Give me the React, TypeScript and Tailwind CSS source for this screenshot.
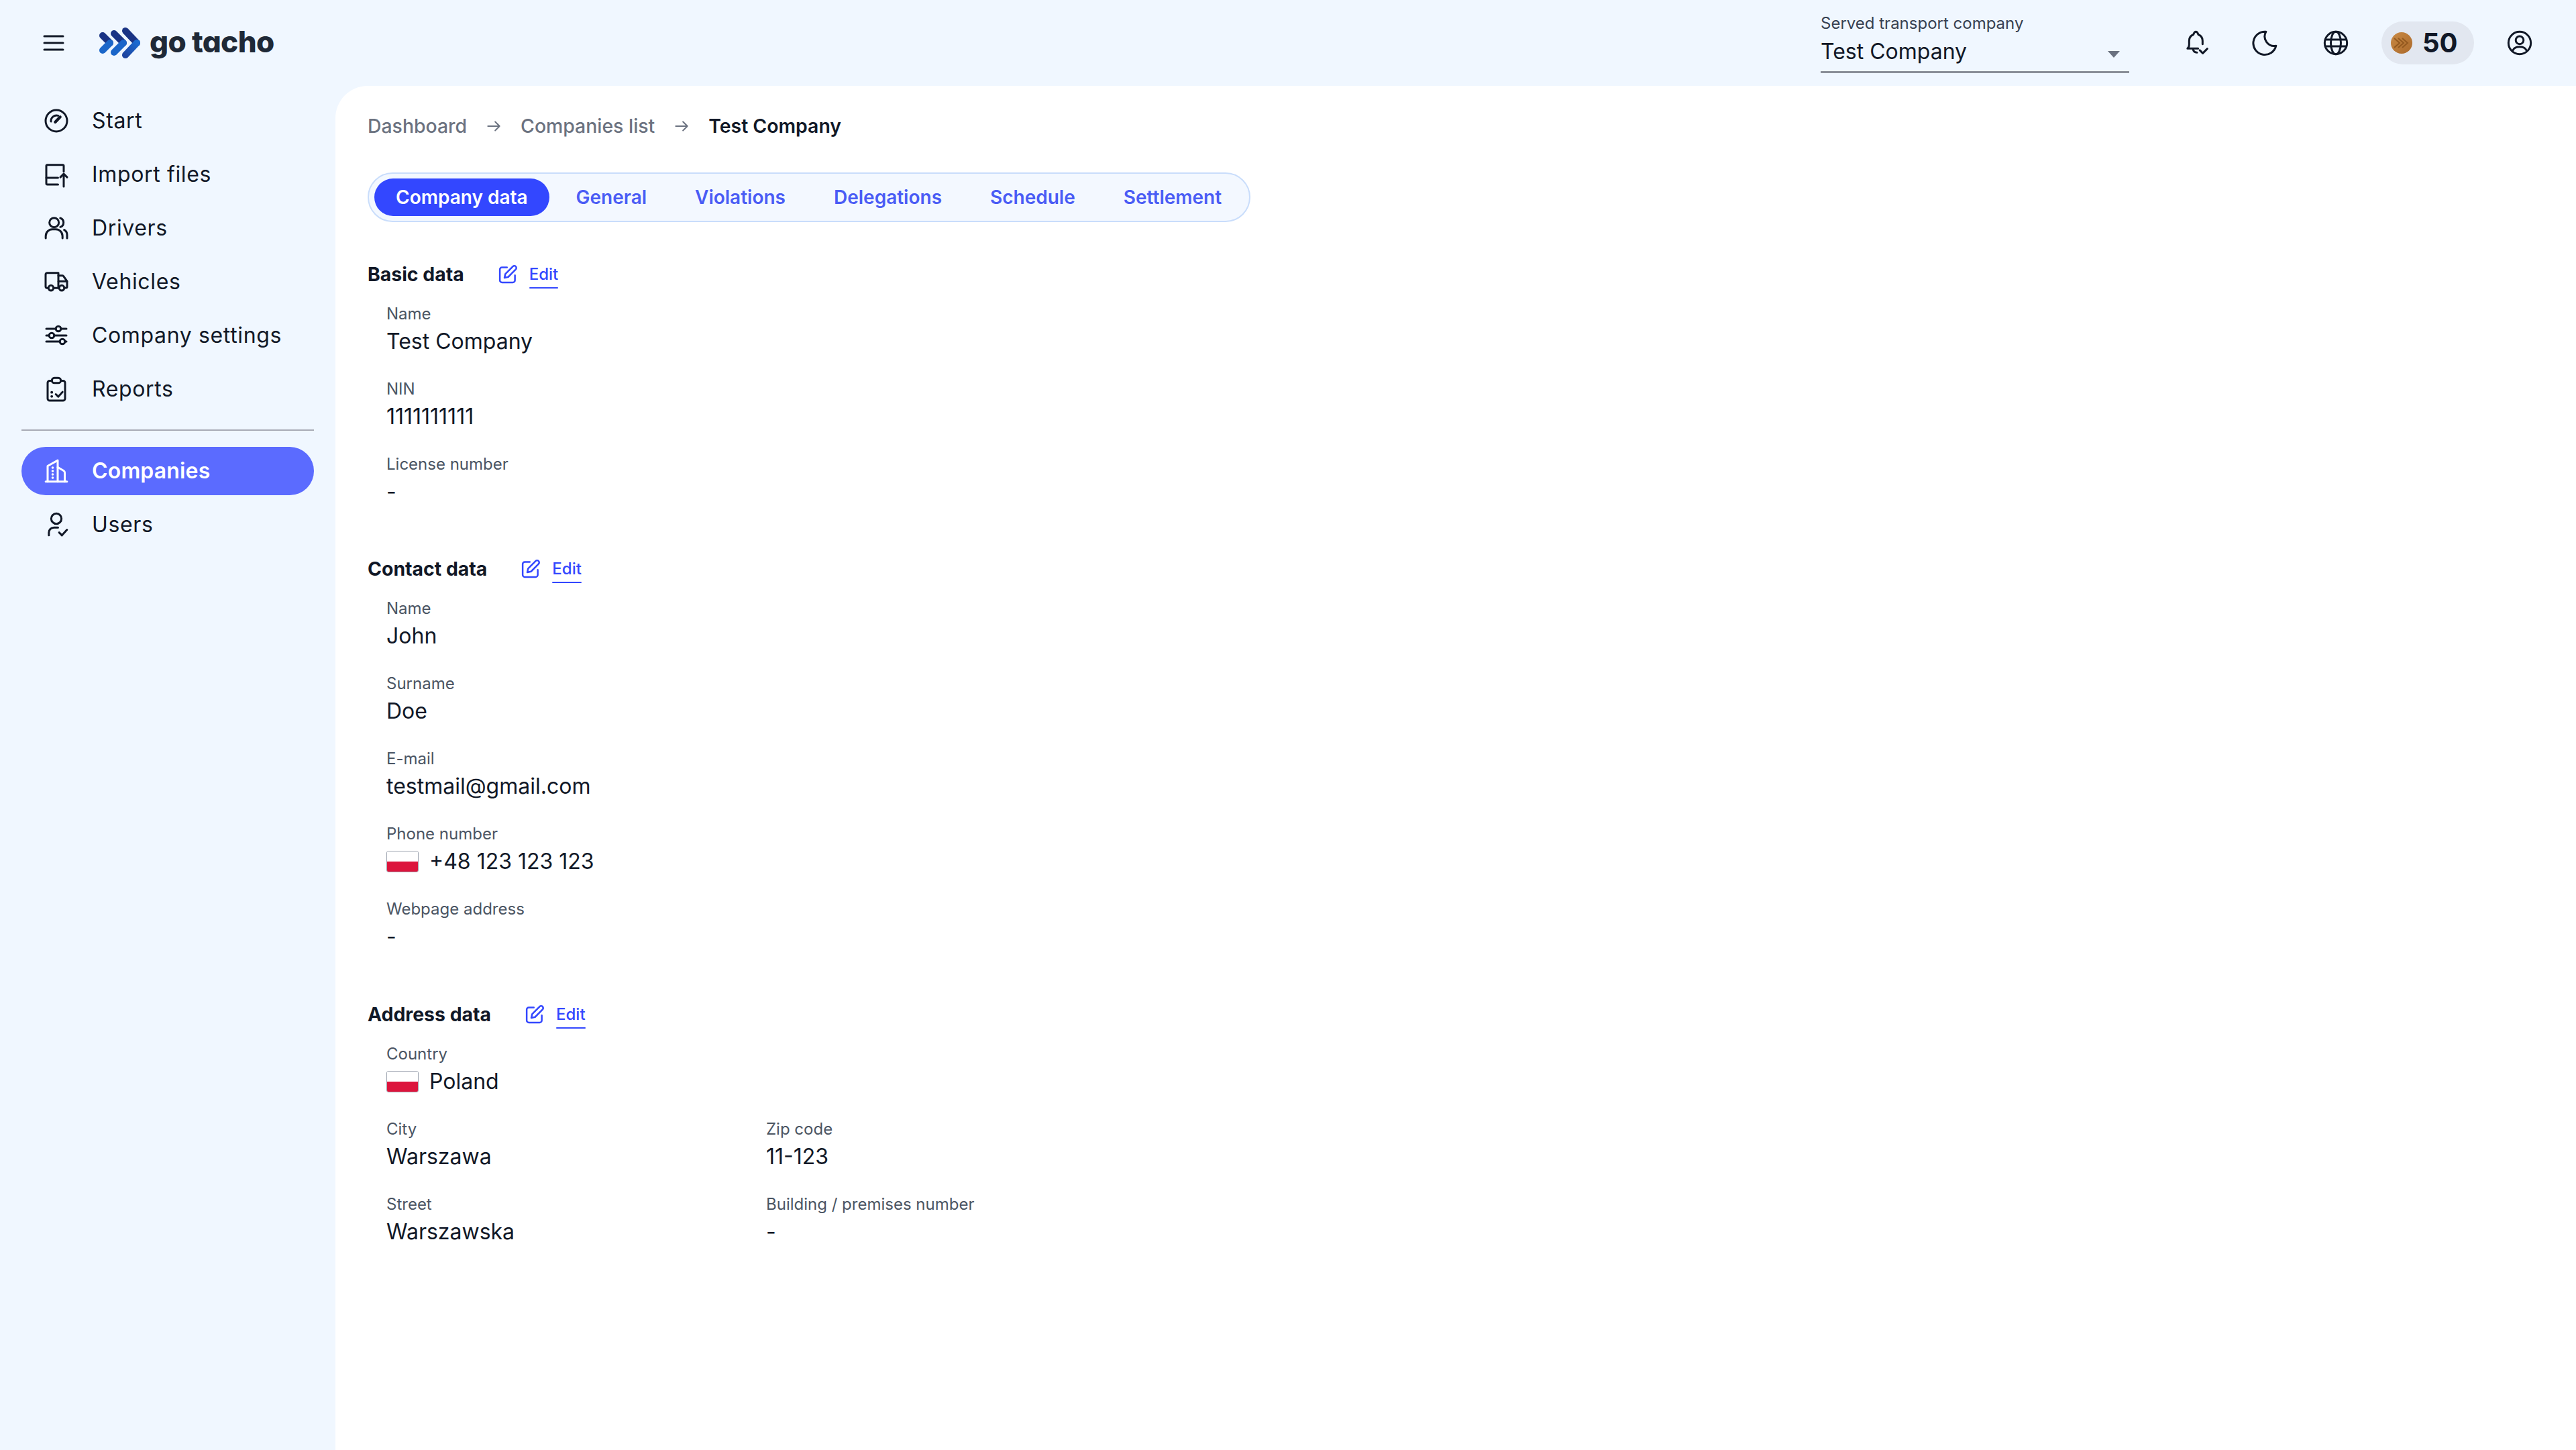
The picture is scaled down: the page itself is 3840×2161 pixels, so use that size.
import React from "react";

const INK = "#111827";

function Svg({ children, size = 40, color = "currentColor", sw = 1.8 }: { children: React.ReactNode; size?: number; color?: string; sw?: number }) {
  return (
    <svg width={size} height={size} viewBox="0 0 24 24" fill="none" stroke={color} strokeWidth={sw} strokeLinecap="round" strokeLinejoin="round" className="shrink-0">
      {children}
    </svg>
  );
}

const icons: Record<string, React.ReactNode> = {
  start: (
    <>
      <circle cx="12" cy="12" r="9.6" />
      <path d="M7.2 12.6a5 5 0 0 1 6.4-5.2" />
      <path d="M11 13.2l4.4-4.6" strokeWidth={2.6} />
    </>
  ),
  import: (
    <>
      <path d="M18.6 9.5V4.400a1 1 0 0 0-1-1H4a1 1 0 0 0-1 1V20a1 1 0 0 0 1 1h9.500" />
      <path d="M3 15h10.500" />
      <path d="M18.600 22.800V11.500M15.600 14.500l3-3 3 3" />
    </>
  ),
  drivers: (
    <>
      <circle cx="10" cy="7" r="4.200" />
      <path d="M15.500 3a4.200 4.200 0 0 1 0 8" />
      <path d="M2.500 21v-2a6 6 0 0 1 6-6h3a6 6 0 0 1 6 6v2" />
      <path d="M19 13.600a5 5 0 0 1 2.600 4.400v3" />
    </>
  ),
  vehicles: (
    <>
      <path d="M4.800 17.500H3.500a1.100 1.100 0 0 1-1.100-1.100V5.500A1.500 1.500 0 0 1 3.900 4h9.900v13.500H9.500" />
      <path d="M13.800 6.500h3.700a1 1 0 0 1 .9.500l3.200 4.500v4.900a1 1 0 0 1-1 1h-1.100" />
      <path d="M14 11.500h7.400" />
      <circle cx="7.200" cy="17.500" r="2.300" />
      <circle cx="16.800" cy="17.500" r="2.300" />
    </>
  ),
  settings: (
    <>
      <path d="M3 6h8.500M16.100 6H21M3 12h2.500M10.100 12H21M3 17.400h12.100M19.700 17.400H21" />
      <circle cx="13.800" cy="6" r="2.300" />
      <circle cx="7.800" cy="12" r="2.300" />
      <circle cx="17.400" cy="17.400" r="2.300" />
    </>
  ),
  reports: (
    <>
      <path d="M8 4.500H6a1.800 1.800 0 0 0-1.800 1.800V20.400A1.800 1.800 0 0 0 6 22.200h12a1.800 1.800 0 0 0 1.800-1.800V6.300A1.800 1.800 0 0 0 18 4.500h-2" />
      <rect x="8" y="2" width="8" height="4.500" rx="2.200" />
      <path d="M11.500 16.500l2.200 2.200 3.800-4.200" />
      <path d="M7.800 14.800h.2M7.800 18.500h.2" strokeWidth={2.200} />
    </>
  ),
  companies: (
    <>
      <path d="M2.500 21.500h19" />
      <path d="M4.200 21.500V7.500l9-5v19" />
      <path d="M13.200 8.500l5.300 3.200a2 2 0 0 1 1 1.700v8.100" />
      <path d="M8.700 9h0M8.700 12h0M8.700 15h0M8.700 18h0" strokeWidth={2.200} />
    </>
  ),
  users: (
    <>
      <circle cx="12" cy="6.600" r="4.600" />
      <path d="M5.300 21.500V19a4.500 4.500 0 0 1 4.500-4.500h3.700" />
      <path d="M14.500 19l2.500 2.500 4.500-5" />
    </>
  ),
};

function Pencil({ size = 30 }: { size?: number }) {
  return (
    <Svg size={size} color="#3347ff" sw={2}>
      <path d="M11 3.500H5a2.500 2.500 0 0 0-2.500 2.500v13A2.500 2.500 0 0 0 5 21.500h13a2.500 2.500 0 0 0 2.500-2.500v-6" />
      <path d="M18 2.500a2.400 2.400 0 0 1 3.500 3.400L12.500 15l-4.500 1 1-4.500z" />
    </Svg>
  );
}

function Flag() {
  return (
    <span className="flex h-[32px] w-[48px] shrink-0 flex-col overflow-hidden rounded-[3px] border border-[#9ca3af]">
      <span className="h-1/2 bg-white" />
      <span className="h-1/2 bg-[#dc143c]" />
    </span>
  );
}

function Field({ label, value, flag }: { label: string; value: string; flag?: boolean }) {
  return (
    <div className="flex h-[112px] flex-col">
      <div className="h-[32px] text-[24px] leading-[32px] text-[#4b5563]">{label}</div>
      <div className="mt-[3px] flex h-[44px] items-center gap-[16px] text-[32px] leading-[44px] text-[#111827]">
        {flag && <Flag />}
        <span>{value}</span>
      </div>
    </div>
  );
}

function SectionTitle({ title }: { title: string }) {
  return (
    <div className="flex h-[48px] items-center">
      <span className="text-[28.4px] font-bold leading-[40px] text-[#111827]">{title}</span>
      <span className="ml-[50px] flex items-center gap-[17px]">
        <Pencil />
        <span className="relative text-[24px] font-medium leading-[32px] text-[#3347ff]">
          Edit
          <span className="absolute inset-x-0 bottom-[-5px] h-[2px] rounded-full bg-[#3347ff]" />
        </span>
      </span>
    </div>
  );
}

function NavItem({ name, label, active }: { name: string; label: string; active?: boolean }) {
  return (
    <div className={`flex h-[72px] items-center gap-[33px] rounded-full pl-[32px] text-[32px] ${active ? "bg-[#5b6bff] font-semibold tracking-[0.005em] text-white" : "tracking-[0.02em] text-[#111827]"}`}>
      <Svg>{icons[name]}</Svg>
      <span>{label}</span>
    </div>
  );
}

function HeaderIcon({ children, className = "" }: { children: React.ReactNode; className?: string }) {
  return <span className={`flex h-[44px] w-[44px] items-center justify-center ${className}`}>{children}</span>;
}

const tabs = ["General", "Violations", "Delegations", "Schedule", "Settlement"];

export default function App() {
  return (
    <div className="flex min-h-screen flex-col bg-[#f0f7ff] text-[#111827]" style={{ fontFamily: "Inter, 'Liberation Sans', sans-serif" }}>
      <header className="flex h-[128px] shrink-0 items-center">
        <button className="ml-[62px] flex h-[36px] w-[36px] items-center justify-center">
          <svg width="36" height="36" viewBox="0 0 36 36" fill="none" stroke={INK} strokeWidth="3" strokeLinecap="round">
            <path d="M4 8h28M4 18h28M4 28h28" />
          </svg>
        </button>
        <div className="ml-[50px] flex items-center">
          <svg width="62" height="46" viewBox="0 0 62 46" className="shrink-0">
            <defs>
              <linearGradient id="lg1" gradientUnits="userSpaceOnUse" x1="56" y1="23" x2="39" y2="42">
                <stop offset="0" stopColor="#1b6ad0" />
                <stop offset="1" stopColor="#1f45a0" />
              </linearGradient>
            </defs>
            <g fill="none" strokeWidth="10" strokeLinecap="round" strokeLinejoin="round">
              <path d="M5 12l11 11" stroke="#1a3384" />
              <path d="M16 23L5 34" stroke="#1b66c9" />
              <path d="M22 9l14 14" stroke="#1a3384" />
              <path d="M36 23L22 37" stroke="#1b66c9" />
              <path d="M39 5l17 18" stroke="#1a3384" />
              <path d="M56 23L39 41" stroke="url(#lg1)" />
            </g>
          </svg>
          <span className="ml-[13px] pb-[4px] text-[44px] font-extrabold leading-[52px] tracking-[-0.015em] text-[#1f2937] [font-feature-settings:'cv11']">go tacho</span>
        </div>
        <div className="ml-auto flex items-center">
          <div className="relative mr-[79px] h-[90px] w-[460px] border-b-[3px] border-[#8a8f98]">
            <div className="text-[24px] leading-[32px] text-[#374151]">Served transport company</div>
            <div className="mt-[4px] text-[32px] leading-[44px] text-[#111827]">Test Company</div>
            <span className="absolute right-[14px] top-[57px] h-0 w-0 border-x-[9px] border-t-[10px] border-x-transparent border-t-[#6b7280]" />
          </div>
          <HeaderIcon>
            <Svg color={INK}>
              <path d="M13 17H3.500c1.200-.8 1.500-2 1.500-3.500V10a6 6 0 0 1 3.800-5.500C9.300 3 10 2 11 2s1.700 1 2.200 2.500A6 6 0 0 1 17 10v3" />
              <path d="M8.500 17.500c.2 1.800 1.500 3 3.500 3" />
              <path d="M14.500 18.500l2.700 2.700 4-4" />
            </Svg>
          </HeaderIcon>
          <HeaderIcon className="ml-[58px]">
            <Svg color={INK}>
              <path d="M12.500 2A10.300 10.300 0 1 0 21.500 14.500 8.500 8.500 0 0 1 12.500 2z" />
            </Svg>
          </HeaderIcon>
          <HeaderIcon className="ml-[61px]">
            <Svg color={INK}>
              <circle cx="12" cy="12" r="10" />
              <path d="M2.800 9h18.400M2.800 15h18.400" />
              <ellipse cx="12" cy="12" rx="4.500" ry="10" />
            </Svg>
          </HeaderIcon>
          <div className="ml-[46px] flex h-[64px] w-[138px] items-center rounded-full bg-[#e2e7f0] pl-[14px]">
            <svg width="32" height="32" viewBox="0 0 32 32" className="shrink-0">
              <defs>
                <linearGradient id="coin" x1="0" y1="0" x2="1" y2="1">
                  <stop offset="0" stopColor="#c98a45" />
                  <stop offset="1" stopColor="#ab6a2b" />
                </linearGradient>
              </defs>
              <circle cx="16" cy="16" r="16" fill="url(#coin)" />
              <path d="M5 9l8 7-8 7M11 9l8 7-8 7M17 9l8 7-8 7" fill="none" stroke="#93591f" strokeWidth="2" />
            </svg>
            <span className="ml-[15px] text-[40px] font-bold leading-[48px] text-[#111827]">50</span>
          </div>
          <HeaderIcon className="ml-[46px] mr-[62px]">
            <Svg color={INK}>
              <circle cx="12" cy="12" r="10" />
              <circle cx="12" cy="9.500" r="3.500" />
              <path d="M6 18.500c1-2 3-3 6-3s5 1 6 3" />
            </Svg>
          </HeaderIcon>
        </div>
      </header>
      <div className="flex flex-1">
        <aside className="w-[500px] shrink-0 px-[32px] pt-[16px]">
          <nav className="flex flex-col gap-[8px]">
            <NavItem name="start" label="Start" />
            <NavItem name="import" label="Import files" />
            <NavItem name="drivers" label="Drivers" />
            <NavItem name="vehicles" label="Vehicles" />
            <NavItem name="settings" label="Company settings" />
            <NavItem name="reports" label="Reports" />
          </nav>
          <div className="my-[24px] h-[2px] bg-[#a8abb5]" />
          <nav className="flex flex-col gap-[8px]">
            <NavItem name="companies" label="Companies" active />
            <NavItem name="users" label="Users" />
          </nav>
        </aside>
        <main className="flex-1 rounded-tl-[48px] bg-white pl-[48px] pt-[40px]">
          <div className="flex h-[40px] items-center text-[28.4px] font-medium text-[#6b7280]">
            <span>Dashboard</span>
            <span className="mx-[27px]"><Svg size={26}><path d="M4 12h16M14 6l6 6-6 6" /></Svg></span>
            <span>Companies list</span>
            <span className="mx-[27px]"><Svg size={26}><path d="M4 12h16M14 6l6 6-6 6" /></Svg></span>
            <span className="font-semibold text-[#111827]">Test Company</span>
          </div>
          <div className="mt-[49px] inline-flex h-[74px] items-center rounded-full border-2 border-[#c9ddfb] bg-[#f3f8ff] pl-[8px] pr-[41px]">
            <span className="flex h-[56px] items-center rounded-full bg-[#3347ff] px-[32px] text-[28px] font-semibold text-white">Company data</span>
            <div className="ml-[40px] flex items-center gap-[72px]">
              {tabs.map((t) => (
                <span key={t} className="text-[28px] font-semibold text-[#4a5cf5]">{t}</span>
              ))}
            </div>
          </div>
          <section className="mt-[54px]">
            <SectionTitle title="Basic data" />
            <div className="mt-[19px] pl-[28px]">
              <Field label="Name" value="Test Company" />
              <Field label="NIN" value="1111111111" />
              <Field label="License number" value="-" />
            </div>
          </section>
          <section className="mt-[36px]">
            <SectionTitle title="Contact data" />
            <div className="mt-[19px] pl-[28px]">
              <Field label="Name" value="John" />
              <Field label="Surname" value="Doe" />
              <Field label="E-mail" value="testmail@gmail.com" />
              <Field label="Phone number" value="+48 123 123 123" flag />
              <Field label="Webpage address" value="-" />
            </div>
          </section>
          <section className="mt-[37px]">
            <SectionTitle title="Address data" />
            <div className="mt-[19px] pl-[28px]">
              <Field label="Country" value="Poland" flag />
              <div className="grid w-[1132px] grid-cols-2">
                <Field label="City" value="Warszawa" />
                <Field label="Zip code" value="11-123" />
                <Field label="Street" value="Warszawska" />
                <Field label="Building / premises number" value="-" />
              </div>
            </div>
          </section>
        </main>
      </div>
    </div>
  );
}
